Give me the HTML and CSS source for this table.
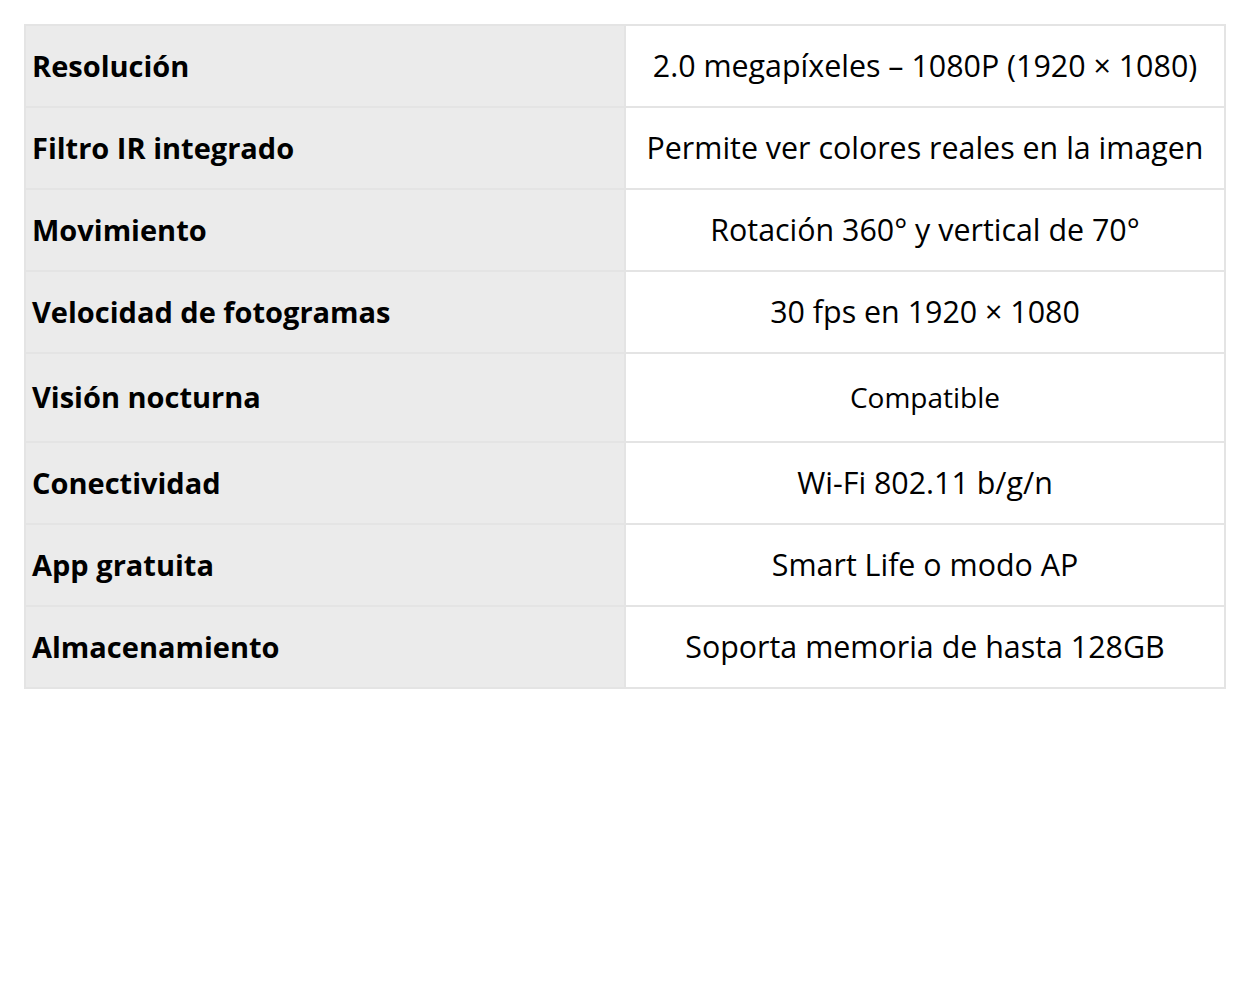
FILE: index.html
```html
<!DOCTYPE html>
<html lang="es">
<head>
<meta charset="utf-8">
<title>Especificaciones</title>
<link rel="stylesheet" href="styles.css">
</head>
<body>
<table class="specs">
  <colgroup><col class="col-key"><col class="col-val"></colgroup>
  <tr class="row"><th>Resolución</th><td>2.0 megapíxeles – 1080P (1920 × 1080)</td></tr>
  <tr class="row"><th>Filtro IR integrado</th><td>Permite ver colores reales en la imagen</td></tr>
  <tr class="row"><th>Movimiento</th><td>Rotación 360° y vertical de 70°</td></tr>
  <tr class="row"><th>Velocidad de fotogramas</th><td>30 fps en 1920 × 1080</td></tr>
  <tr class="row tall"><th>Visión nocturna</th><td class="small">Compatible</td></tr>
  <tr class="row"><th>Conectividad</th><td>Wi-Fi 802.11 b/g/n</td></tr>
  <tr class="row"><th>App gratuita</th><td>Smart Life o modo AP</td></tr>
  <tr class="row"><th>Almacenamiento</th><td>Soporta memoria de hasta 128GB</td></tr>
</table>
</body>
</html>
```
FILE: styles.css
```css
html, body {
  margin: 0;
  background: #ffffff;
}
body {
  padding: 24px 0 0 24px;
  font-family: "Open Sans", "Noto Sans", sans-serif;
  color: #000;
}
.specs {
  border-collapse: collapse;
  width: 1200px;
  table-layout: fixed;
}
.col-key, .col-val {
  width: 600px;
}
.specs th, .specs td {
  border: 2px solid #e4e4e4;
  height: 80px;
  padding: 0 8px;
  line-height: 1.2;
}
.specs th {
  background: #ebebeb;
  text-align: left;
  font-weight: 700;
  font-size: 29px;
  padding-left: 6px;
}
.specs td {
  text-align: center;
  font-weight: 400;
  font-size: 30.4px;
}
.specs .tall th, .specs .tall td {
  height: 87px;
}
.specs td.small {
  font-size: 28px;
}
```
